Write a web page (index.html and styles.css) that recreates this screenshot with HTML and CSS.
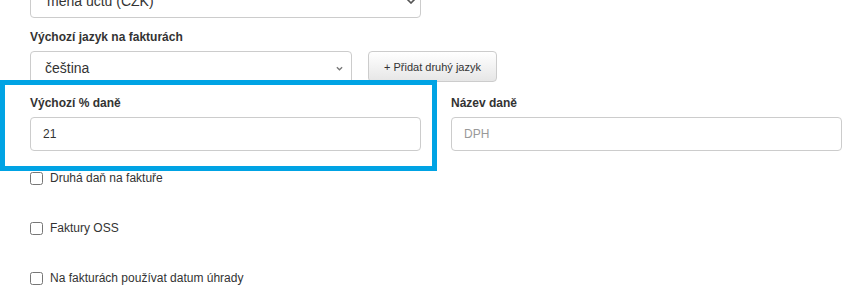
FILE: index.html
```html
<!DOCTYPE html>
<html lang="cs">

<head>
  <meta charset="UTF-8">
  <meta name="viewport" content="width=device-width, initial-scale=1.0">
  <title>Nastavení faktur</title>
  <link rel="stylesheet" href="styles.css">
</head>

<body>
  <form class="settings">
    <div class="select select_wide select_top">
      <span>měna účtu (CZK)</span>
      <svg class="chevron chevron_big" viewBox="0 0 10 6" width="10" height="6"><path d="M1 1 L5 5 L9 1" fill="none" stroke="#555" stroke-width="1.6"/></svg>
    </div>

    <label class="label label_lang">Výchozí jazyk na fakturách</label>
    <div class="lang_row">
      <div class="select select_lang">
        <span>čeština</span>
        <svg class="chevron" viewBox="0 0 8 5" width="7" height="5"><path d="M1 1 L4 4 L7 1" fill="none" stroke="#777" stroke-width="1.5"/></svg>
      </div>
      <button type="button" class="btn">+ Přidat druhý jazyk</button>
    </div>

    <div class="cols">
      <div class="group">
        <label class="label">Výchozí % daně</label>
        <input class="input" type="text" value="21">
      </div>
      <div class="group">
        <label class="label">Název daně</label>
        <input class="input" type="text" placeholder="DPH">
      </div>
    </div>

    <ul class="checks">
      <li><input type="checkbox" id="c1"><label for="c1">Druhá daň na faktuře</label></li>
      <li><input type="checkbox" id="c2"><label for="c2">Faktury OSS</label></li>
      <li><input type="checkbox" id="c3"><label for="c3">Na fakturách používat datum úhrady</label></li>
    </ul>
  </form>

  <!-- zvýraznění -->
  <div class="highlight"></div>
</body>

</html>
```

FILE: styles.css
```css
* {
  box-sizing: border-box;
  margin: 0;
  padding: 0;
}

body {
  position: relative;
  overflow: hidden;
  height: 300px;
  background: #fff;
  color: #333;
  font-family: "Liberation Sans", Arial, sans-serif;
  font-size: 12px;
}

.settings {
  padding-left: 30px;
  width: 842px;
}

.select {
  display: flex;
  align-items: center;
  justify-content: space-between;
  height: 35px;
  padding: 0 8px 0 16px;
  border: 1px solid #ccc;
  border-radius: 4px;
  background: #fff;
  font-size: 14px;
  color: #333;
}

.select_wide {
  width: 391px;
  padding-right: 4px;
}

.select_top {
  margin-top: -17px;
}

.chevron_big {
  margin-top: 0;
}

.label {
  display: block;
  font-weight: bold;
  font-size: 12px;
  line-height: 16px;
  color: #333;
}

.label_lang {
  margin-top: 11px;
  margin-bottom: 6px;
}

.lang_row {
  display: flex;
  align-items: flex-start;
  gap: 16px;
}

.select_lang {
  width: 322px;
  height: 34px;
  padding-left: 14px;
}

.btn {
  width: 129px;
  height: 31px;
  border: 1px solid #ccc;
  border-radius: 4px;
  background: linear-gradient(#fff, #e6e6e6);
  font-family: "Liberation Sans", Arial, sans-serif;
  font-size: 11px;
  color: #333;
}

.cols {
  display: grid;
  grid-template-columns: 391px 391px;
  column-gap: 30px;
  margin-top: 10px;
}

.group .label {
  margin-bottom: 6px;
}

.input {
  display: block;
  width: 100%;
  height: 34px;
  padding: 0 12px;
  border: 1px solid #ccc;
  border-radius: 4px;
  font-family: "Liberation Sans", Arial, sans-serif;
  font-size: 12px;
  color: #333;
}

.input::placeholder {
  color: #999;
}

.checks {
  list-style: none;
  margin-top: 19px;
  display: flex;
  flex-direction: column;
  gap: 34px;
}

.checks li {
  display: flex;
  align-items: center;
  gap: 7px;
  height: 16px;
  font-size: 12px;
}

.checks input {
  width: 13px;
  height: 13px;
  margin: 0;
}

/* modrý rámeček */
.highlight {
  position: absolute;
  left: 0;
  top: 80px;
  width: 437px;
  height: 91px;
  border: 5px solid #00a3e4;
  pointer-events: none;
}
```
